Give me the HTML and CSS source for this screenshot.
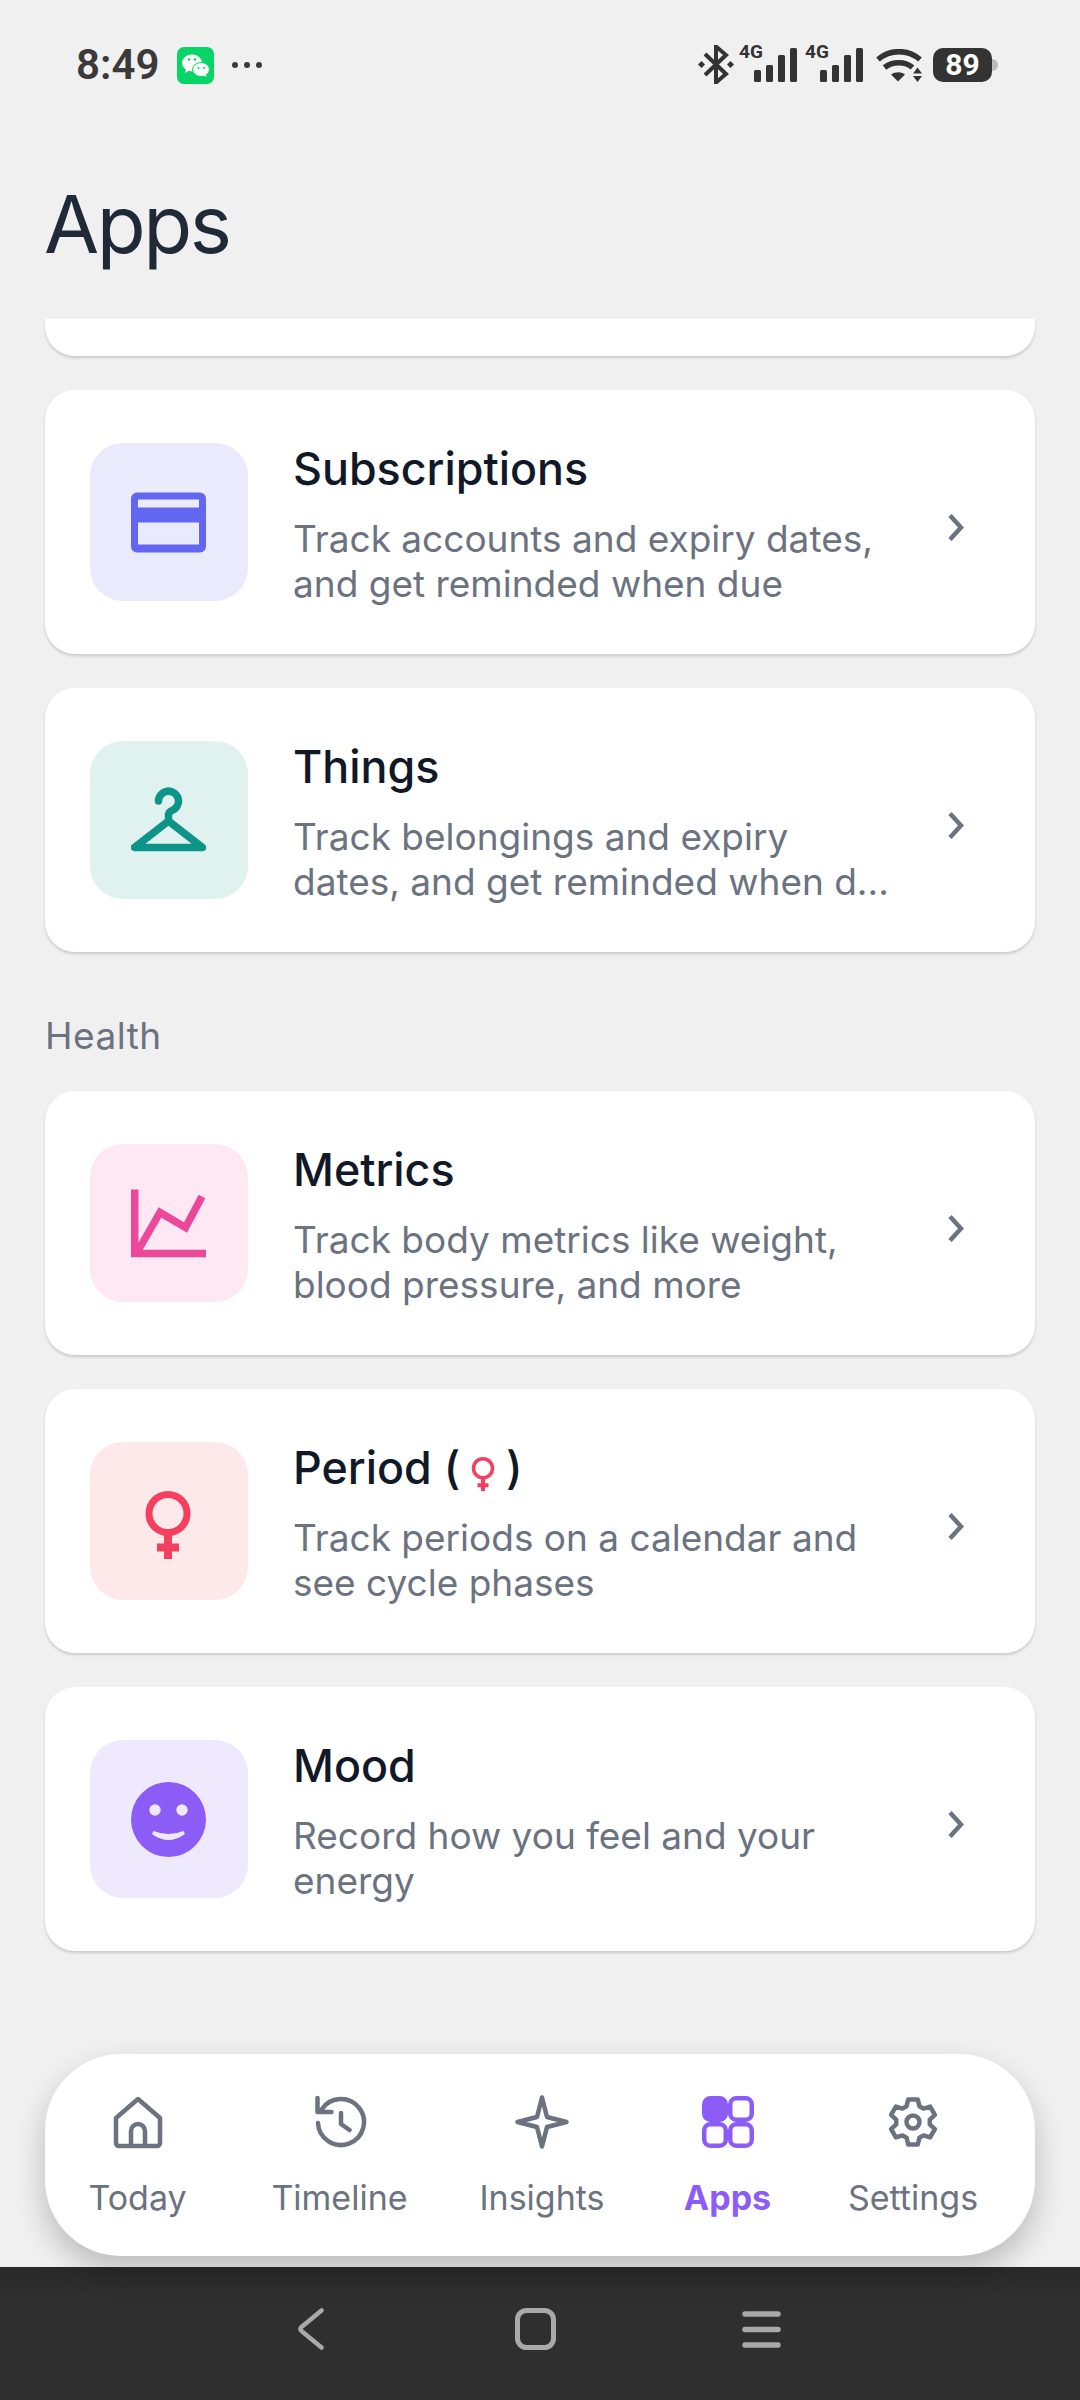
FILE: index.html
```html
<!DOCTYPE html>
<html lang="en">
<head>
<meta charset="utf-8">
<title>Apps</title>
<link rel="stylesheet" href="styles.css">
</head>
<body>
<div class="screen">
  <header class="status">
    <div class="status-left">
      <span class="time">8:49</span>
      <svg class="wechat" viewBox="0 0 37 37"><rect width="37" height="37" rx="7" fill="#07d566"/><ellipse cx="15" cy="16" rx="10" ry="8.500" fill="#fff"/><path d="M9 22l-1 4 5-3z" fill="#fff"/><ellipse cx="24" cy="22.500" rx="8.500" ry="7" fill="#fff" stroke="#07d566" stroke-width="1"/><path d="M28 27l2 3-5-2z" fill="#fff"/><circle cx="12" cy="12.500" r="1.300" fill="#07d566"/><circle cx="18" cy="12.500" r="1.300" fill="#07d566"/><circle cx="21.500" cy="21" r="1.100" fill="#07d566"/><circle cx="27" cy="21" r="1.100" fill="#07d566"/></svg>
      <svg class="dots" viewBox="0 0 32 8"><circle cx="4" cy="4" r="3" fill="#3a3a3a"/><circle cx="16" cy="4" r="3" fill="#3a3a3a"/><circle cx="28" cy="4" r="3" fill="#3a3a3a"/></svg>
    </div>
    <div class="status-right">
      <svg class="bt" viewBox="0 0 36 39"><path d="M7 9l21 20-10 8.500V1.500L28 10 7 30" fill="none" stroke="#333" stroke-width="4"/><path d="M0 19.500l3.500-3.500 3.500 3.500-3.500 3.500zM29 19.500l3.500-3.500 3.500 3.500-3.500 3.500z" fill="#333"/></svg>
      <div class="sig"><span class="net">4G</span><svg class="bars" viewBox="0 0 43 34"><rect x="0" y="22" width="7" height="12" rx="1.500" fill="#333"/><rect x="12" y="17" width="7" height="17" rx="1.500" fill="#333"/><rect x="24" y="7" width="7" height="27" rx="1.500" fill="#333"/><rect x="36" y="0" width="7" height="34" rx="1.500" fill="#333"/></svg></div>
      <div class="sig sig-second"><span class="net">4G</span><svg class="bars" viewBox="0 0 43 34"><rect x="0" y="22" width="7" height="12" rx="1.500" fill="#333"/><rect x="12" y="17" width="7" height="17" rx="1.500" fill="#333"/><rect x="24" y="7" width="7" height="27" rx="1.500" fill="#333"/><rect x="36" y="0" width="7" height="34" rx="1.500" fill="#333"/></svg></div>
      <svg class="wifi" viewBox="0 0 46 33"><path d="M2 10.500C14 0 32 0 44 10.500M8.500 18.500c8-6.500 21-6.500 28 0" fill="none" stroke="#333" stroke-width="5.500"/><path d="M15 25.500c4.500-3 10-3 14 0l-7 7z" fill="#333"/><path d="M41.500 18.500l4.500 6h-9zM41.500 33l4.500-6h-9z" fill="#333"/></svg>
      <div class="battery"><span class="bat-body">89</span><span class="bat-tip"></span></div>
    </div>
  </header>

  <h1 class="page-title">Apps</h1>

  <main class="scroller">
    <div class="card-stub"></div>

    <a class="card">
      <span class="tile tile-indigo">
        <svg class="glyph" viewBox="0 0 75 60"><path fill-rule="evenodd" d="M6 0h63a6 6 0 0 1 6 6v48a6 6 0 0 1-6 6H6a6 6 0 0 1-6-6V6a6 6 0 0 1 6-6zM7 7v8h61V7zM7 30v22h61V30z" fill="#6366f1"/></svg>
      </span>
      <span class="body">
        <span class="name">Subscriptions</span>
        <span class="desc">Track accounts and expiry dates, and get reminded when due</span>
      </span>
      <svg class="chev" viewBox="0 0 16 27"><path d="M2 1.500l11 12-11 12" fill="none" stroke="#6b7280" stroke-width="4.500"/></svg>
    </a>

    <a class="card">
      <span class="tile tile-teal">
        <svg class="glyph" viewBox="0 0 75 61"><path d="M27.500 11a10 10 0 1 1 13.500 9.500c-2.500 1-3.500 2-3.500 5v5M37.500 31L3.500 57.500h68z" fill="none" stroke="#0d9488" stroke-width="7.500" stroke-linecap="round" stroke-linejoin="round"/></svg>
      </span>
      <span class="body">
        <span class="name">Things</span>
        <span class="desc">Track belongings and expiry<br>dates, and get reminded when d...</span>
      </span>
      <svg class="chev" viewBox="0 0 16 27"><path d="M2 1.500l11 12-11 12" fill="none" stroke="#6b7280" stroke-width="4.500"/></svg>
    </a>

    <h2 class="section">Health</h2>

    <a class="card">
      <span class="tile tile-pink">
        <svg class="glyph" viewBox="0 0 75 68"><path d="M3.700 0v64h71.300M6 63l23-40 25.500 15L71 7" fill="none" stroke="#ec4899" stroke-width="7.500"/></svg>
      </span>
      <span class="body">
        <span class="name">Metrics</span>
        <span class="desc">Track body metrics like weight, blood pressure, and more</span>
      </span>
      <svg class="chev" viewBox="0 0 16 27"><path d="M2 1.500l11 12-11 12" fill="none" stroke="#6b7280" stroke-width="4.500"/></svg>
    </a>

    <a class="card">
      <span class="tile tile-rose">
        <svg class="glyph-female" viewBox="0 0 46 68"><circle cx="23" cy="22.500" r="19" fill="none" stroke="#f43f5e" stroke-width="7"/><path d="M23 42v26M12 56.500h22" fill="none" stroke="#f43f5e" stroke-width="8"/></svg>
      </span>
      <span class="body">
        <span class="name">Period ( <svg class="mini-female" viewBox="0 0 46 68"><circle cx="23" cy="22.500" r="19" fill="none" stroke="#f43f5e" stroke-width="7"/><path d="M23 42v26M12 56.500h22" fill="none" stroke="#f43f5e" stroke-width="8"/></svg> )</span>
        <span class="desc">Track periods on a calendar and see cycle phases</span>
      </span>
      <svg class="chev" viewBox="0 0 16 27"><path d="M2 1.500l11 12-11 12" fill="none" stroke="#6b7280" stroke-width="4.500"/></svg>
    </a>

    <a class="card">
      <span class="tile tile-violet">
        <svg class="glyph" viewBox="0 0 75 75"><circle cx="37.500" cy="37.500" r="37.500" fill="#8b5cf6"/><circle cx="24" cy="28" r="5.700" fill="#efe9fe"/><circle cx="51" cy="28" r="5.700" fill="#efe9fe"/><path d="M22.500 49q15 6 30 0l1.500 3q-16.500 12-33 0z" fill="#efe9fe"/></svg>
      </span>
      <span class="body">
        <span class="name">Mood</span>
        <span class="desc">Record how you feel and your energy</span>
      </span>
      <svg class="chev" viewBox="0 0 16 27"><path d="M2 1.500l11 12-11 12" fill="none" stroke="#6b7280" stroke-width="4.500"/></svg>
    </a>
  </main>

  <nav class="tabbar">
    <a class="tab tab-today">
      <svg class="tab-icon" viewBox="0 0 56 56"><path d="M6 24L28 5l22 19v25a3 3 0 0 1-3 3H9a3 3 0 0 1-3-3zM21 52V37a7 7 0 0 1 14 0v15" fill="none" stroke="#6b7280" stroke-width="4.500" stroke-linejoin="round"/></svg>
      <span class="tab-label">Today</span>
    </a>
    <a class="tab tab-timeline">
      <svg class="tab-icon" viewBox="-1 0 56 56"><path d="M9 15A23 23 0 1 1 5 29M4.500 4v14h14M28 19v11l8.500 6" fill="none" stroke="#6b7280" stroke-width="4.500" stroke-linecap="round" stroke-linejoin="round"/></svg>
      <span class="tab-label">Timeline</span>
    </a>
    <a class="tab tab-insights">
      <svg class="tab-icon" viewBox="0 0 56 56"><path d="M28 3.500L33 23l19.500 5L33 33l-5 19.500L23 33 3.500 28 23 23z" fill="none" stroke="#6b7280" stroke-width="4.500" stroke-linejoin="round"/></svg>
      <span class="tab-label">Insights</span>
    </a>
    <a class="tab tab-apps active">
      <svg class="tab-icon" viewBox="0 0 56 56"><rect x="4.250" y="4.250" width="21.500" height="21.500" rx="6" fill="#8b5cf6" stroke="#8b5cf6" stroke-width="4.500"/><rect x="30.250" y="4.250" width="21.500" height="21.500" rx="6" fill="none" stroke="#8b5cf6" stroke-width="4.500"/><rect x="4.250" y="30.250" width="21.500" height="21.500" rx="6" fill="none" stroke="#8b5cf6" stroke-width="4.500"/><rect x="30.250" y="30.250" width="21.500" height="21.500" rx="6" fill="none" stroke="#8b5cf6" stroke-width="4.500"/></svg>
      <span class="tab-label">Apps</span>
    </a>
    <a class="tab tab-settings">
      <svg class="tab-icon" viewBox="0 0 56 56"><circle cx="28" cy="28" r="6.500" fill="none" stroke="#6b7280" stroke-width="4.500"/><path d="M23.200 5.500h9.600l1.600 6.700 4.100 2.400 6.600-2 4.800 8.300-5.100 4.700v4.800l5.100 4.700-4.800 8.300-6.600-2-4.100 2.400-1.600 6.700h-9.600l-1.600-6.700-4.100-2.400-6.600 2-4.800-8.300 5.100-4.700v-4.800l-5.100-4.700 4.800-8.300 6.600 2 4.100-2.400z" fill="none" stroke="#6b7280" stroke-width="4.500" stroke-linejoin="round"/></svg>
      <span class="tab-label">Settings</span>
    </a>
  </nav>

  <footer class="sysnav">
    <svg class="sys-back" viewBox="0 0 26 42"><path d="M23.500 2.500L3.500 19c-1.500 1.200-1.500 2.800 0 4l20 16.500" fill="none" stroke="#a9a9a9" stroke-width="4.500" stroke-linecap="round"/></svg>
    <svg class="sys-home" viewBox="0 0 41 42"><rect x="2.500" y="2.500" width="36" height="37" rx="9" fill="none" stroke="#a9a9a9" stroke-width="5"/></svg>
    <svg class="sys-menu" viewBox="0 0 39 37"><path d="M3 3h33M3 18.500h33M3 34h33" fill="none" stroke="#a9a9a9" stroke-width="5.500" stroke-linecap="round"/></svg>
  </footer>
</div>
</body>
</html>
```

FILE: styles.css
```css
* { box-sizing: border-box; }
html, body { margin: 0; padding: 0; }
body { background: #f0f0f0; font-family: Inter, "Liberation Sans", sans-serif; }

.screen {
  width: 1080px;
  height: 2400px;
  display: flex;
  flex-direction: column;
  overflow: hidden;
  background: #f0f0f0;
}

.status {
  height: 128px;
  padding: 45px 82px 0 76px;
  display: flex;
  justify-content: space-between;
  align-items: flex-start;
  flex: none;
}
.status-left { display: flex; align-items: center; height: 40px; }
.time { font-family: Roboto, sans-serif; font-size: 42px; font-weight: 600; color: #3a3a3a; line-height: 40px; }
.wechat { width: 37px; height: 37px; margin-left: 18px; }
.dots { width: 32px; height: 8px; margin-left: 17px; }
.status-right { display: flex; align-items: flex-start; }
.bt { width: 36px; height: 39px; }
.sig { position: relative; width: 58px; height: 37px; margin-left: 5px; }
.sig-second { margin-left: 8px; }
.net { position: absolute; left: 0; top: -3px; font-family: Roboto, sans-serif; font-size: 19px; font-weight: 700; color: #333; line-height: 20px; }
.bars { position: absolute; right: 0; bottom: 0; width: 43px; height: 34px; }
.wifi { width: 46px; height: 33px; margin: 4px 0 0 13px; }
.battery { display: flex; align-items: center; margin: 3px 0 0 11px; }
.bat-body { width: 59px; height: 34px; background: #333; border-radius: 10px; color: #fff; font-family: Roboto, sans-serif; font-size: 30px; font-weight: 700; line-height: 34px; text-align: center; }
.bat-tip { width: 6px; height: 12px; background: #bbb; border-radius: 0 6px 6px 0; }

.page-title {
  margin: 0;
  height: 191px;
  flex: none;
  padding: 52px 0 0 44px;
  font-size: 80px;
  font-weight: 400;
  letter-spacing: -2.5px;
  line-height: 88px;
  color: #1f2937;
}

.scroller {
  flex: 1;
  min-height: 0;
  padding: 0 45px;
  display: flex;
  flex-direction: column;
  gap: 34px;
  overflow: hidden;
}

.card-stub {
  flex: none;
  height: 37px;
  background: #fff;
  border-radius: 0 0 30px 30px;
  box-shadow: 0 2px 3px rgba(0,0,0,0.16);
}

.card {
  flex: none;
  height: 264px;
  display: flex;
  align-items: center;
  background: #fff;
  border-radius: 30px;
  box-shadow: 0 2px 3px rgba(0,0,0,0.16);
  padding: 0 71px 0 45px;
}

.tile {
  flex: none;
  width: 158px;
  height: 158px;
  border-radius: 33px;
  display: flex;
  align-items: center;
  justify-content: center;
}
.tile-indigo { background: #eaeafd; }
.tile-teal { background: #e0f2f0; }
.tile-pink { background: #fde8f3; }
.tile-rose { background: #fde8ea; }
.tile-violet { background: #efe9fe; }
.glyph { width: 75px; height: 75px; margin-right: 2px; }
.glyph-female { width: 46px; height: 68px; margin: 8px 2px 0 0; }

.body { flex: 1; min-width: 0; margin-left: 45px; display: flex; flex-direction: column; padding: 5px 30px 0 0; }
.name { font-size: 44.8px; line-height: 52px; font-weight: 450; color: #111827; display: block; margin-bottom: 21px; }
.desc { font-size: 37px; line-height: 45px; color: #6b7280; display: block; }
.mini-female { width: 24px; height: 34px; vertical-align: -7px; margin: 0 -1px; }
.chev { flex: none; width: 16px; height: 27px; margin-top: 10px; }

.section {
  margin: 28px 0 -1px;
  flex: none;
  font-size: 37px;
  letter-spacing: 0.5px;
  font-weight: 400;
  line-height: 44px;
  color: #6b7280;
}

.tabbar {
  flex: none;
  margin: 0 45px 11px;
  height: 202px;
  background: #fff;
  border-radius: 76px;
  box-shadow: 0 14px 30px rgba(0,0,0,0.22);
  display: flex;
  position: relative;
}
.tab { display: flex; flex-direction: column; align-items: center; padding-top: 40px; }
.tab-icon { width: 56px; height: 56px; display: block; }
.tab-label { font-size: 34px; line-height: 42px; margin-top: 27px; color: #6b7280; white-space: nowrap; }
.tab-today { width: 185px; }
.tab-timeline { width: 219px; }
.tab-insights { width: 186px; }
.tab-apps { width: 185px; }
.tab-settings { width: 186px; }
.active .tab-label { color: #8b5cf6; font-weight: 700; }

.sysnav {
  flex: none;
  height: 133px;
  background: linear-gradient(#292929, #2f2f2f 30px);
  display: flex;
  justify-content: center;
  align-items: center;
  padding: 0 2px 9px 0;
}
.sys-back { width: 26px; height: 42px; margin-right: 191px; }
.sys-home { width: 41px; height: 42px; margin-right: 186px; }
.sys-menu { width: 39px; height: 37px; }
```
